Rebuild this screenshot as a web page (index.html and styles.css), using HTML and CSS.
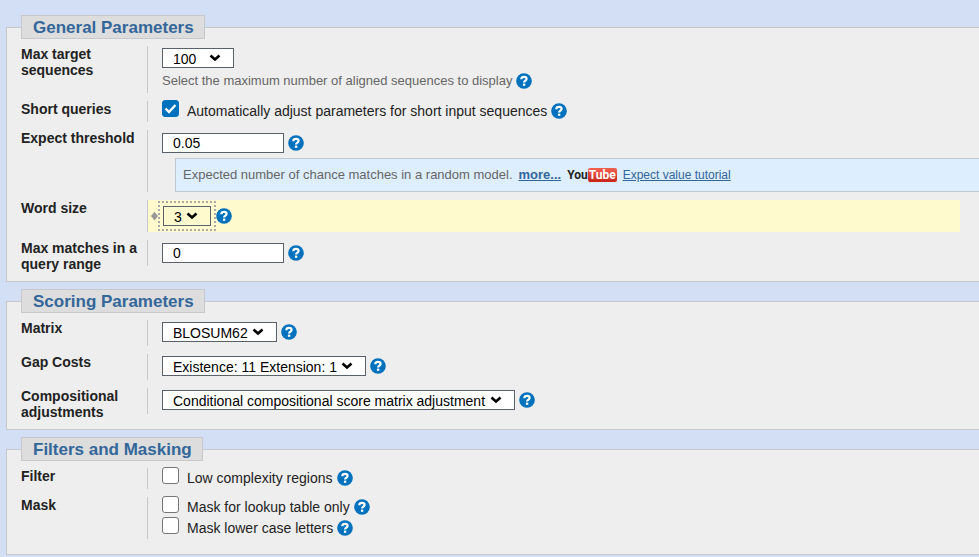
FILE: index.html
```html
<!DOCTYPE html>
<html lang="en">
<head>
    <meta charset="UTF-8">
    <meta name="viewport" content="width=device-width, initial-scale=1.0">
    <title>Algorithm parameters</title>
    <link rel="stylesheet" href="styles.css">
</head>
<body>
    <svg class="defs" aria-hidden="true">
        <symbol id="help" viewBox="0 0 16 16">
            <circle cx="8" cy="8" r="7.8" fill="#0071bc"/>
            <path d="M5.300 6.200C5.400 4.600 6.500 3.900 8 3.900c1.500 0 2.600.8 2.600 2.100C10.600 7.700 8.100 7.600 8.100 9.600" fill="none" stroke="#fff" stroke-width="2.200"/>
            <rect x="6.900" y="10.600" width="2.400" height="2.200" fill="#fff"/>
        </symbol>
    </svg>

    <form>
        <fieldset class="panel">
            <legend>General Parameters</legend>
            <div class="rows">
                <div class="row">
                    <label class="name" for="max_seq">Max target sequences</label>
                    <div class="content">
                        <div class="field">
                            <select id="max_seq">
                                <option>10</option>
                                <option>50</option>
                                <option selected>100</option>
                                <option>250</option>
                                <option>500</option>
                                <option>1000</option>
                                <option>5000</option>
                            </select>
                        </div>
                        <div class="field hint">
                            <span>Select the maximum number of aligned sequences to display</span>
                            <button type="button" class="help" aria-label="Max target sequences help"><svg><use href="#help"/></svg></button>
                        </div>
                    </div>
                </div>

                <div class="row">
                    <span class="name">Short queries</span>
                    <div class="content checks">
                        <div class="check">
                            <input type="checkbox" id="short_query" checked>
                            <label for="short_query">Automatically adjust parameters for short input sequences</label>
                            <button type="button" class="help" aria-label="Short queries help"><svg><use href="#help"/></svg></button>
                        </div>
                    </div>
                </div>

                <div class="row">
                    <label class="name" for="expect">Expect threshold</label>
                    <div class="content text">
                        <div class="field">
                            <input type="text" id="expect" value="0.05">
                            <button type="button" class="help" aria-label="Expect threshold help"><svg><use href="#help"/></svg></button>
                        </div>
                        <div class="info">
                            <span>Expected number of chance matches in a random model.</span>
                            <a href="#more" class="more">more...</a>
                            <span class="youtube">You<span class="tube">Tube</span></span>
                            <a href="#tutorial" class="tutorial">Expect value tutorial</a>
                        </div>
                    </div>
                </div>

                <div class="row">
                    <label class="name" for="word_size">Word size</label>
                    <div class="content changed">
                        <svg class="diamond" viewBox="0 0 8 10"><path d="M4 0L8 5L4 10L0 5Z" fill="#999"/></svg>
                        <span class="marked">
                            <select id="word_size">
                                <option>2</option>
                                <option selected>3</option>
                                <option>5</option>
                                <option>6</option>
                            </select>
                        </span>
                        <button type="button" class="help" aria-label="Word size help"><svg><use href="#help"/></svg></button>
                    </div>
                </div>

                <div class="row">
                    <label class="name" for="hsp_range">Max matches in a query range</label>
                    <div class="content text">
                        <div class="field">
                            <input type="text" id="hsp_range" value="0">
                            <button type="button" class="help" aria-label="Max matches help"><svg><use href="#help"/></svg></button>
                        </div>
                    </div>
                </div>
            </div>
        </fieldset>

        <fieldset class="panel">
            <legend>Scoring Parameters</legend>
            <div class="rows">
                <div class="row">
                    <label class="name" for="matrix">Matrix</label>
                    <div class="content">
                        <div class="field">
                            <select id="matrix">
                                <option>PAM30</option>
                                <option>PAM70</option>
                                <option selected>BLOSUM62</option>
                                <option>BLOSUM45</option>
                            </select>
                            <button type="button" class="help" aria-label="Matrix help"><svg><use href="#help"/></svg></button>
                        </div>
                    </div>
                </div>

                <div class="row">
                    <label class="name" for="gap_costs">Gap Costs</label>
                    <div class="content">
                        <div class="field">
                            <select id="gap_costs">
                                <option>Existence: 9 Extension: 2</option>
                                <option selected>Existence: 11 Extension: 1</option>
                            </select>
                            <button type="button" class="help" aria-label="Gap costs help"><svg><use href="#help"/></svg></button>
                        </div>
                    </div>
                </div>

                <div class="row">
                    <label class="name" for="composition">Compositional adjustments</label>
                    <div class="content">
                        <div class="field">
                            <select id="composition">
                                <option>No adjustment</option>
                                <option>Composition-based statistics</option>
                                <option selected>Conditional compositional score matrix adjustment</option>
                            </select>
                            <button type="button" class="help" aria-label="Compositional adjustments help"><svg><use href="#help"/></svg></button>
                        </div>
                    </div>
                </div>
            </div>
        </fieldset>

        <fieldset class="panel">
            <legend>Filters and Masking</legend>
            <div class="rows last">
                <div class="row">
                    <span class="name">Filter</span>
                    <div class="content checks">
                        <div class="check">
                            <input type="checkbox" id="low_complexity">
                            <label for="low_complexity">Low complexity regions</label>
                            <button type="button" class="help" aria-label="Filter help"><svg><use href="#help"/></svg></button>
                        </div>
                    </div>
                </div>

                <div class="row">
                    <span class="name">Mask</span>
                    <div class="content checks">
                        <div class="check">
                            <input type="checkbox" id="mask_lookup">
                            <label for="mask_lookup">Mask for lookup table only</label>
                            <button type="button" class="help" aria-label="Lookup table mask help"><svg><use href="#help"/></svg></button>
                        </div>
                        <div class="check">
                            <input type="checkbox" id="mask_lower">
                            <label for="mask_lower">Mask lower case letters</label>
                            <button type="button" class="help" aria-label="Lower case mask help"><svg><use href="#help"/></svg></button>
                        </div>
                    </div>
                </div>
            </div>
        </fieldset>
    </form>
</body>
</html>
```
FILE: styles.css
```css
* {
    box-sizing: border-box;
}

body {
    margin: 0;
    padding: 15px 0 0 6px;
    background: #d3dff5;
    color: #222;
    font-family: "Liberation Sans", Arial, sans-serif;
    font-size: 14px;
    line-height: 16px;
}

.defs {
    display: none;
}

/* Panels */
.panel {
    min-width: 0;
    margin: 0 0 7px;
    padding: 7px 19px 9px 14px;
    border: 1px solid #c8c8cc;
    border-right: none;
    background: #eee;
}

legend {
    padding: 2px 10px 0 11px;
    border: 1px solid #c8c8cc;
    background: #ddd;
    color: #369;
    font-size: 17px;
    font-weight: bold;
    line-height: 20px;
}

.rows {
    display: flex;
    flex-direction: column;
    gap: 8px;
}

.rows.last {
    padding-bottom: 6px;
}

.row {
    display: flex;
    align-items: flex-start;
}

.name {
    flex: none;
    width: 126px;
    font-weight: bold;
}

.content {
    flex: 1;
    min-width: 0;
    padding: 2px 0 4px 14px;
    border-left: 1px solid #c8c8cc;
}

.content.text {
    padding: 3px 0 3px 14px;
}

.content.text:has(.info) {
    padding-bottom: 0;
}

.content.checks {
    padding: 0 0 0 14px;
}

/* Controls */
.field {
    display: flex;
    align-items: center;
    gap: 4px;
}

select,
input[type="text"] {
    height: 20px;
    margin: 0;
    border: 1px solid #5b616b;
    border-radius: 0;
    background: #fff;
    color: #000;
    font-family: inherit;
    font-size: 14px;
}

select {
    appearance: none;
    padding: 1px 28px 0 10px;
    background: #fff url("data:image/svg+xml,%3Csvg xmlns='http://www.w3.org/2000/svg' width='12' height='8'%3E%3Cpath d='M1.500 1.500L6 5.500L10.500 1.500' fill='none' stroke='%23000' stroke-width='2.600'/%3E%3C/svg%3E") no-repeat right 12px top 5px;
}

input[type="text"] {
    width: 122px;
    padding: 0 10px;
}

.help {
    flex: none;
    width: 16px;
    height: 16px;
    padding: 0;
    border: none;
    background: none;
    cursor: pointer;
}

.help svg {
    display: block;
    width: 16px;
    height: 16px;
}

.hint {
    padding-top: 5px;
    color: #666;
    font-size: 13px;
}

.check {
    display: flex;
    align-items: center;
    gap: 4px;
    height: 21px;
    padding-bottom: 2px;
}

.check input {
    appearance: none;
    align-self: flex-start;
    width: 17px;
    height: 17px;
    margin: -1px 4px 0 0;
    border: 1px solid #767676;
    border-radius: 3px;
    background: #fff;
}

.check input:checked {
    border-color: #0071bc;
    background: #0071bc url("data:image/svg+xml,%3Csvg xmlns='http://www.w3.org/2000/svg' width='15' height='15'%3E%3Cpath d='M2.500 7.500L6 11L12.500 4' fill='none' stroke='%23fff' stroke-width='2.400'/%3E%3C/svg%3E") no-repeat center;
}

/* Tip under the expect threshold, runs to the window edge */
.info {
    display: flex;
    align-items: center;
    gap: 6px;
    height: 34px;
    margin: 5px -19px 0 13px;
    padding-left: 7px;
    border: 1px solid #c0c8d0;
    border-right: none;
    background: #def;
    color: #666;
    font-size: 13px;
}

.info a {
    color: #369;
}

.more {
    font-weight: bold;
}

.tutorial {
    font-size: 12px;
}

.youtube {
    display: flex;
    align-items: center;
    color: #222;
    font-family: Roboto, sans-serif;
    font-size: 12px;
    font-weight: bold;
    line-height: 14px;
}

.tube {
    padding: 0 1px;
    border-radius: 2px;
    background: linear-gradient(#f0624f, #c8241a);
    color: #fff;
}

/* Value changed from the default */
.content.changed {
    display: flex;
    align-items: center;
    padding: 1px 0 1px 3px;
    background: #fefacd;
}

.diamond {
    width: 7px;
    height: 10px;
}

.marked {
    display: flex;
    padding: 3px;
    border: 2px dotted #aaa;
}

.changed select {
    background-color: #fefacd;
}
```
